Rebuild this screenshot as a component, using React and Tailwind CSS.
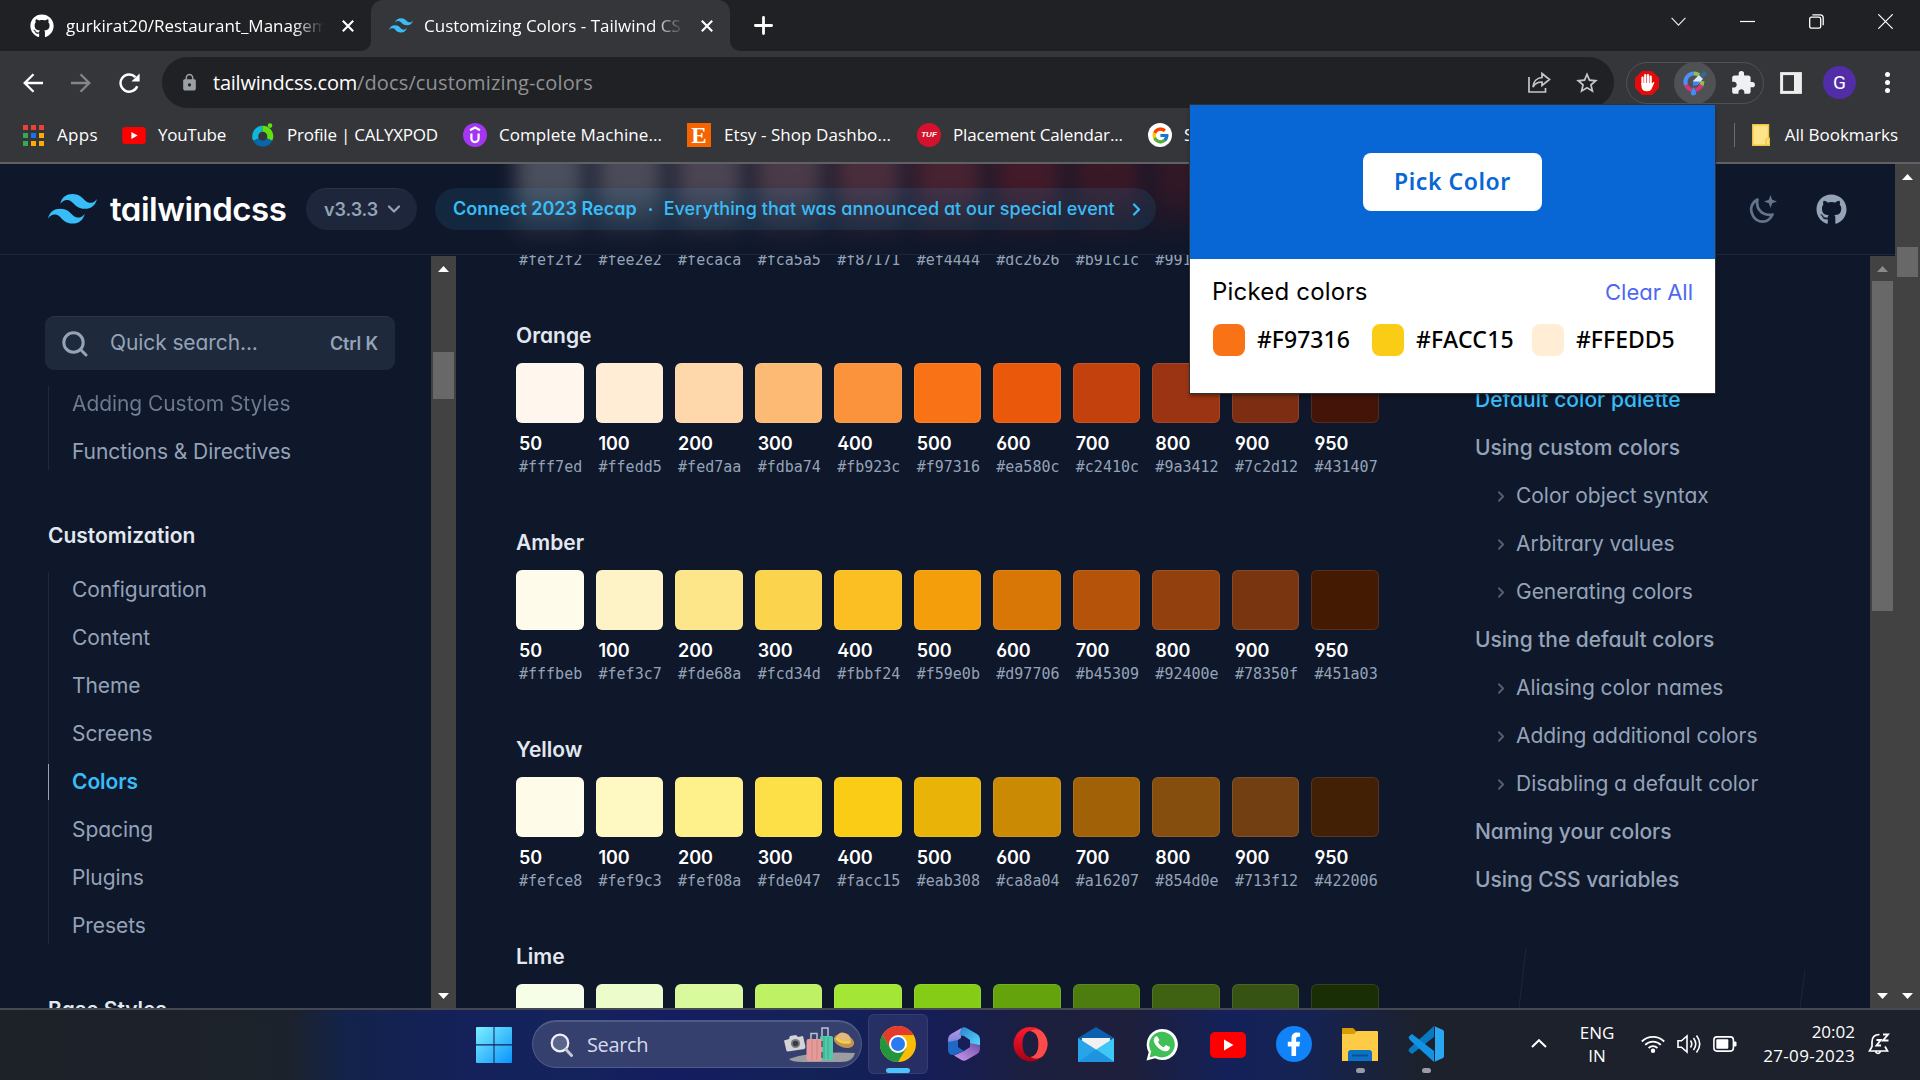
import React from "react";
import { FaGithub } from "react-icons/fa";
import { FcGoogle } from "react-icons/fc";
import { MdLock, MdExtension, MdStarBorder } from "react-icons/md";

const SHADES = ["50", "100", "200", "300", "400", "500", "600", "700", "800", "900", "950"];

const RED = ["#fef2f2", "#fee2e2", "#fecaca", "#fca5a5", "#f87171", "#ef4444", "#dc2626", "#b91c1c", "#991b1b", "#7f1d1d", "#450a0a"];

const PALETTES = [
  { name: "Red", colors: RED },
  { name: "Orange", colors: ["#fff7ed", "#ffedd5", "#fed7aa", "#fdba74", "#fb923c", "#f97316", "#ea580c", "#c2410c", "#9a3412", "#7c2d12", "#431407"] },
  { name: "Amber", colors: ["#fffbeb", "#fef3c7", "#fde68a", "#fcd34d", "#fbbf24", "#f59e0b", "#d97706", "#b45309", "#92400e", "#78350f", "#451a03"] },
  { name: "Yellow", colors: ["#fefce8", "#fef9c3", "#fef08a", "#fde047", "#facc15", "#eab308", "#ca8a04", "#a16207", "#854d0e", "#713f12", "#422006"] },
  { name: "Lime", colors: ["#f7fee7", "#ecfccb", "#d9f99d", "#bef264", "#a3e635", "#84cc16", "#65a30d", "#4d7c0f", "#3f6212", "#365314", "#1a2e05"] },
];

function TailwindMark({ className }) {
  return (
    <svg viewBox="0 0 54 33" className={className} fill="#38bdf8">
      <path fillRule="evenodd" d="M27 0c-7.2 0-11.7 3.6-13.5 10.8 2.7-3.6 5.85-4.95 9.45-4.05 2.054.513 3.522 2.004 5.147 3.653C30.744 13.09 33.808 16.2 40.5 16.2c7.2 0 11.7-3.6 13.5-10.8-2.7 3.6-5.85 4.95-9.45 4.05-2.054-.513-3.522-2.004-5.147-3.653C36.756 3.11 33.692 0 27 0zM13.5 16.2C6.3 16.2 1.8 19.8 0 27c2.7-3.6 5.85-4.95 9.45-4.05 2.054.514 3.522 2.004 5.147 3.653C17.244 29.29 20.308 32.4 27 32.4c7.2 0 11.7-3.6 13.5-10.8-2.7 3.6-5.85 4.95-9.45 4.05-2.054-.513-3.522-2.004-5.147-3.653C23.256 19.31 20.192 16.2 13.5 16.2z" />
    </svg>
  );
}

function CloseX() {
  return (
    <svg viewBox="0 0 12 12" className="size-3 shrink-0" stroke="#fff" strokeWidth="2.1" fill="none">
      <path d="M.8.8l10.4 10.4M11.2.8L.8 11.2" />
    </svg>
  );
}

function TabStrip() {
  return (
    <div className="flex h-[51px] bg-[#35363a]">
      <div className="flex h-[51px] w-[371px] items-center rounded-br-[10px] bg-[#202124] pl-[30px]">
        <FaGithub className="size-6 shrink-0 text-white" />
        <div className="ml-3 w-[258px] overflow-hidden text-[17px] leading-6 text-white [mask-image:linear-gradient(to_right,#000_88%,transparent)]">
          <span className="whitespace-nowrap">gurkirat20/Restaurant_Managem</span>
        </div>
        <div className="ml-[18px]"><CloseX /></div>
      </div>
      <div className="bg-[#202124]">
        <div className="flex h-[51px] w-[359px] items-center rounded-t-[12px] bg-[#35363a] pl-[18px]">
          <TailwindMark className="h-[15px] w-[24px] shrink-0" />
          <div className="ml-[11px] w-[260px] overflow-hidden text-[17px] leading-6 text-white [mask-image:linear-gradient(to_right,#000_88%,transparent)]">
            <span className="whitespace-nowrap">Customizing Colors - Tailwind CS</span>
          </div>
          <div className="ml-[17px]"><CloseX /></div>
        </div>
      </div>
      <div className="flex flex-1 rounded-bl-[10px] bg-[#202124]">
        <svg viewBox="0 0 19 19" className="ml-6 mt-4 size-[19px]" stroke="#fff" strokeWidth="2.8" strokeLinecap="round">
          <path d="M9.5 1.4v16.2M1.4 9.5h16.2" />
        </svg>
        <div className="ml-auto flex h-[43px] items-center gap-[54px] pr-[27px]">
          <svg viewBox="0 0 15 15" className="size-[15px]" stroke="#e8e8e8" strokeWidth="1.2" fill="none"><path d="M.6 3.8l6.9 7.4 6.9-7.4" /></svg>
          <svg viewBox="0 0 15 15" className="size-[15px]" stroke="#fff" strokeWidth="1.2" fill="none"><path d="M0 7.5h15" /></svg>
          <svg viewBox="0 0 15 15" className="size-[15px]" stroke="#fff" strokeWidth="1.3" fill="none"><rect x=".7" y="3.2" width="11" height="11" rx="1.8" /><path d="M3.4.8h7.8q3 0 3 3v7.4" /></svg>
          <svg viewBox="0 0 15 15" className="size-[15px]" stroke="#fff" strokeWidth="1.2" fill="none"><path d="M.3.3l14.4 14.4M14.7.3L.3 14.7" /></svg>
        </div>
      </div>
    </div>
  );
}

function Toolbar() {
  return (
    <div className="flex h-[57px] items-start bg-[#35363a] pt-[6px]">
      <div className="flex h-[51px] w-[162px] items-center gap-[28px] pl-[23px]">
        <svg viewBox="0 0 20 20" className="size-5" stroke="#fff" strokeWidth="2.3" fill="none"><path d="M20 10H2M10.5 1.2L1.7 10l8.8 8.8" /></svg>
        <svg viewBox="0 0 20 20" className="size-5" stroke="#85868a" strokeWidth="2.3" fill="none"><path d="M0 10h18M9.5 1.2l8.8 8.8-8.8 8.8" /></svg>
        <svg viewBox="0 0 21 20" className="h-5 w-[21px]" fill="none"><path d="M18.2 13.2A8.6 8.6 0 1 1 16.4 4.2" stroke="#fff" strokeWidth="2.4" /><path d="M20.6.4v8.2h-8.2z" fill="#fff" /></svg>
      </div>
      <div className="flex h-[51px] w-[1452px] items-center rounded-full bg-[#202124] pl-[18px] pr-[14px]">
        <MdLock className="size-[19px] text-[#9aa0a6]" />
        <div className="ml-[14px] whitespace-nowrap text-[20px] leading-7">
          <span className="tracking-[-0.23px] text-white">tailwindcss.com</span>
          <span className="tracking-[0.14px] text-[#8f9195]">/docs/customizing-colors</span>
        </div>
        <svg viewBox="0 0 23 21" className="ml-auto h-[21px] w-[23px]" stroke="#c4c6ca" strokeWidth="1.7" fill="none"><path d="M1 5v15h16.500v-4M14 1.500l7.500 6-7.500 6V10c-4 0-7 1.500-9 5 .3-5 3.500-9 9-9.500z" /></svg>
        <MdStarBorder className="ml-[23px] size-[26px] text-[#c4c6ca]" />
      </div>
      <div className="ml-3 mt-[5px] flex h-[42px] w-[138px] items-center rounded-full border border-[#515257] pl-[8px]">
        <svg viewBox="0 0 24 24" className="size-6 shrink-0"><path d="M7 0h10l7 7v10l-7 7H7l-7-7V7z" fill="#e60b0b" /><path d="M7.500 13V6.500M10.200 12V4M13 12V4M15.700 12V5.500" stroke="#fff" strokeWidth="2.200" strokeLinecap="round" /><path d="M6.400 12h10.400v1l1.200-1.700q1.200-.6 1.300.4l-2.600 6q-1 2.500-4.500 2.500-5.800 0-5.800-5.500z" fill="#fff" /></svg>
        <div className="ml-[15px] flex size-[42px] shrink-0 items-center justify-center rounded-full bg-[#505155]">
          <svg viewBox="0 0 26 26" className="size-[26px]" fill="none">
            <path d="M12 3.500A8.500 8.500 0 0 0 4 15" stroke="#4f8ff7" strokeWidth="4" />
            <path d="M12 3.500q3 0 5 1.500M20.500 11l-1 5" stroke="#8bc34a" strokeWidth="4" />
            <path d="M4 15a8.500 8.500 0 0 0 6 5M13.500 20a8.500 8.500 0 0 0 6-5" stroke="#d6337c" strokeWidth="4" />
            <path d="M11 11l6-6 4 4-6 6h-4z" fill="#dbe9fb" /><path d="M11 11.500h7l-3.500 4H11z" fill="#3f82ee" />
            <path d="M18 5l4-4 3 3-4 4z" fill="#2f6d92" /><path d="M11.500 17q5.500 8 0 8.500t0-8.500z" fill="#3f8ff2" />
          </svg>
        </div>
        <MdExtension className="ml-[14px] size-[26px] shrink-0 text-[#eef0f3]" />
      </div>
      <div className="ml-4 flex h-[51px] items-center">
        <svg viewBox="0 0 22 22" className="size-[22px]"><rect x="1.600" y="1.600" width="18.800" height="18.800" fill="none" stroke="#eee" strokeWidth="3" /><rect x="14" y="1" width="7" height="20" fill="#eee" /></svg>
        <div className="ml-[21px] flex size-[33px] items-center justify-center rounded-full bg-[#512da8] font-['Roboto'] text-[19px] leading-none text-white">G</div>
        <div className="ml-[29px] flex flex-col gap-[3px]">
          <div className="size-[5px] rounded-full bg-white" /><div className="size-[5px] rounded-full bg-white" /><div className="size-[5px] rounded-full bg-white" />
        </div>
      </div>
    </div>
  );
}

function Bookmark({ icon, gap, label, className }) {
  return (
    <div className={"flex shrink-0 items-center " + className}>
      <div className="shrink-0">{icon}</div>
      <div className={"whitespace-nowrap " + gap}>{label}</div>
    </div>
  );
}

function YouTubeMark({ className }) {
  return (
    <svg viewBox="0 0 36 26" className={className}><rect width="36" height="26" rx="5" fill="#f00" /><path d="M14 7.500l9.500 5.500-9.500 5.500z" fill="#fff" /></svg>
  );
}

function BookmarksBar() {
  const dots = ["#ea4335", "#ea4335", "#ea4335", "#34a853", "#1a73e8", "#fbab04", "#34a853", "#fbab04", "#fbab04"];
  return (
    <div className="flex h-[56px] items-center border-b-2 border-[#606165] bg-[#35363a] text-[17px] leading-6 text-white">
      <Bookmark
        className="w-[99px] pl-[23px]" gap="ml-[13px] tracking-[0.3px]" label="Apps"
        icon={<div className="grid grid-cols-3 gap-[3px]">{dots.map((c, i) => <div key={i} className="size-[5px]" style={{ background: c }} />)}</div>}
      />
      <Bookmark className="w-[130px] pl-[23px]" gap="ml-3 tracking-[-0.27px]" label="YouTube" icon={<YouTubeMark className="h-[17px] w-6" />} />
      <Bookmark
        className="w-[234px] pl-[23px]" gap="ml-[13px] tracking-[-0.22px]" label="Profile | CALYXPOD"
        icon={
          <svg viewBox="0 0 22 24" className="h-6 w-[22px]" fill="none">
            <path d="M10.500 5.700A7.500 7.500 0 0 0 4 16.500" stroke="#13b5d8" strokeWidth="6" />
            <path d="M10.500 5.700A7.500 7.500 0 0 1 17.500 16.500" stroke="#5fe00f" strokeWidth="6" />
            <path d="M4 16.500a7.500 7.500 0 0 0 13.500 0" stroke="#0767a8" strokeWidth="6" />
            <circle cx="18" cy="2.600" r="2.300" fill="#5fe00f" />
          </svg>
        }
      />
      <Bookmark
        className="w-[224px]" gap="ml-3 tracking-[0.06px]" label="Complete Machine..."
        icon={<svg viewBox="0 0 24 24" className="size-6"><circle cx="12" cy="12" r="12" fill="#a435f0" /><path d="M7 7.200L12 4.500l5 2.700M8.400 10.500v5a3.600 3.600 0 0 0 7.200 0v-5" stroke="#fff" strokeWidth="2.200" fill="none" /></svg>}
      />
      <Bookmark
        className="w-[230px]" gap="ml-[13px] tracking-[0.07px]" label="Etsy - Shop Dashbo..."
        icon={<div className="flex size-6 items-center justify-center bg-[#f56400] font-['Liberation_Serif'] text-[23px] font-bold leading-none text-white">E</div>}
      />
      <Bookmark
        className="w-[231px]" gap="ml-3 tracking-[-0.12px]" label="Placement Calendar..."
        icon={<div className="flex size-6 items-center justify-center rounded-full bg-[#d4122d] font-['Liberation_Sans'] text-[8px] font-bold italic tracking-normal text-white">TUF</div>}
      />
      <Bookmark
        className="w-[57px]" gap="ml-3" label="S"
        icon={<div className="flex size-6 items-center justify-center rounded-full bg-white"><FcGoogle className="size-[19px]" /></div>}
      />
      <div className="ml-auto h-6 w-px bg-[#6b6c70]" />
      <svg viewBox="0 0 18 22" className="ml-[17px] h-[22px] w-[18px]"><path d="M.7.700h15.800v13.500h1v7.100H.7z" fill="#ffe388" stroke="#eec53e" strokeWidth="1.400" /><path d="M14 21v-5q0-1.500 1.700-1.500" fill="none" stroke="#eec53e" strokeWidth="1.400" /></svg>
      <div className="ml-[15px] mr-[22px] whitespace-nowrap">All Bookmarks</div>
    </div>
  );
}

function Chevron({ className }) {
  return (
    <svg viewBox="0 0 9 13" className={className} fill="none" stroke="currentColor" strokeWidth="2.200" strokeLinecap="round" strokeLinejoin="round"><path d="M2 1.500l5 5-5 5" /></svg>
  );
}

function DocsHeader() {
  return (
    <div className="relative flex h-[91px] items-center overflow-hidden border-b border-[#1c2539] pl-[48px]">
      <div className="absolute left-[516px] top-[-30px] flex w-[864px] gap-3 opacity-25 blur-[10px]">
        {RED.map((c) => <div key={c} className="h-[110px] flex-1" style={{ background: `linear-gradient(to bottom, ${c} 50%, transparent)` }} />)}
      </div>
      <div className="relative flex w-full items-center whitespace-nowrap">
        <TailwindMark className="h-[30px] w-[49px]" />
        <div className="ml-[13px] w-[177px] text-[33px] font-semibold leading-[42px] tracking-[-0.5px] text-white">tailwindcss</div>
        <div className="ml-[19px] flex h-[42px] w-[111px] items-center rounded-full border-t border-[#29344a] bg-[#1d263a] pl-[18px] text-[18px] font-semibold tracking-[-0.1px] text-[#94a3b8]">
          v3.3.3
          <svg viewBox="0 0 14 9" className="ml-[9px] h-[9px] w-[14px]" fill="none" stroke="#94a3b8" strokeWidth="2.200" strokeLinecap="round" strokeLinejoin="round"><path d="M2 1.500l5 5 5-5" /></svg>
        </div>
        <div className="ml-[18px] flex h-[42px] w-[721px] items-center rounded-full bg-[#38bdf8]/10 pl-[18px] text-[18px] leading-[42px] text-[#38bdf8]">
          <span className="font-semibold">Connect 2023 Recap</span>
          <div className="mx-[12px] size-[3px] rounded-full bg-[#38bdf8]" />
          <span className="font-medium tracking-[0.04px]">Everything that was announced at our special event</span>
          <Chevron className="ml-[17px] h-[13px] w-[9px]" />
        </div>
        <svg viewBox="0 0 28 29" className="ml-auto h-[29px] w-7" fill="none">
          <path d="M8.500 4.500C2 8 .5 15 4 20.800 8 28 19 29.500 23.500 19.500 12.500 21.500 6.500 13 8.500 4.500z" stroke="#64748b" strokeWidth="2.700" strokeLinejoin="round" />
          <path d="M21.500 0l1.700 4.800L28 6.500l-4.800 1.700-1.700 4.800-1.700-4.800L15 6.500l4.800-1.700z" fill="#64748b" />
        </svg>
        <FaGithub className="ml-[39px] mr-[48px] size-[31px] text-[#94a3b8]" />
      </div>
    </div>
  );
}

function Arrow({ down, dim }) {
  return (
    <svg viewBox="0 0 11 6" className="h-[6px] w-[11px]" fill={dim ? "#8a8a8a" : "#fff"}><path d={down ? "M0 0h11L5.500 6z" : "M0 6h11L5.500 0z"} /></svg>
  );
}

function Scrollbar({ spacer, thumb, dim, className }) {
  return (
    <div className={"flex w-[25px] shrink-0 flex-col items-center bg-[#424242] " + className}>
      <Arrow dim={dim} />
      <div className={spacer} />
      <div className={"w-[21px] bg-[#686868] " + thumb} />
      <div className="mb-[9px] mt-auto"><Arrow down /></div>
    </div>
  );
}

const NAV = ["Configuration", "Content", "Theme", "Screens", "Colors", "Spacing", "Plugins", "Presets"];

function Sidebar() {
  return (
    <div className="w-[431px] shrink-0 overflow-hidden whitespace-nowrap pt-[61px] tracking-[-0.07px]">
      <div className="ml-[45px] flex h-[54px] w-[350px] items-center rounded-[9px] border-t border-[#2a3648] bg-[#1e293b] pl-[17px] pr-[17px] text-[21px] text-[#94a3b8]">
        <svg viewBox="0 0 26 26" className="size-[26px]" fill="none" stroke="#94a3b8" strokeWidth="3" strokeLinecap="round"><circle cx="11.500" cy="11.500" r="9.700" /><path d="M18.800 18.800L24 24" /></svg>
        <div className="mb-px ml-[22px] tracking-[-0.1px]">Quick search...</div>
        <div className="mb-px ml-auto text-[18px] font-semibold tracking-[-0.15px]">Ctrl K</div>
      </div>
      <div className="ml-[48px] mt-[16px] flex flex-col gap-3 border-l border-[#1e293b] pl-[23px] text-[21px] leading-9 text-[#94a3b8]">
        <div className="bg-gradient-to-b from-[#5b677c] to-[#7f8da2] bg-clip-text text-transparent">Adding Custom Styles</div>
        <div>Functions &amp; Directives</div>
      </div>
      <div className="ml-[48px] mt-[48px] text-[21px] font-semibold leading-9 tracking-normal text-[#e2e8f0]">Customization</div>
      <div className="ml-[48px] mt-[18px] flex flex-col gap-3 text-[21px] leading-9 text-[#94a3b8] shadow-[inset_1px_0_0_#1e293b]">
        {NAV.map((n) => n === "Colors"
          ? <div key={n} className="border-l border-[#94a3b8] pl-[23px] font-semibold text-[#38bdf8]">{n}</div>
          : <div key={n} className="pl-[24px]">{n}</div>)}
      </div>
      <div className="ml-[48px] mt-[48px] text-[21px] font-semibold leading-9 text-[#e2e8f0]">Base Styles</div>
    </div>
  );
}

function Palette({ name, colors }) {
  return (
    <div className="h-[207px]">
      <div className="text-[21px] font-semibold leading-[32px] text-[#e2e8f0]">{name}</div>
      <div className="mt-[11px] grid grid-cols-11 gap-x-3">
        {colors.map((c, i) => (
          <div key={c} className="min-w-0">
            <div className="h-[60px] rounded-[6px] shadow-[inset_0_0_0_1px_rgba(255,255,255,0.1)]" style={{ backgroundColor: c }} />
            <div className="mt-[9px] pl-[3px] text-[18px] font-semibold leading-6 tracking-[-0.1px] text-white">{SHADES[i]}</div>
            <div className="pl-[3px] font-['DejaVu_Sans_Mono'] text-[15px] leading-[22px] text-[#94a3b8]">{c}</div>
          </div>
        ))}
      </div>
    </div>
  );
}

const TOC = [
  ["Default color palette", "active"],
  ["Using custom colors"],
  ["Color object syntax", "sub"],
  ["Arbitrary values", "sub"],
  ["Generating colors", "sub"],
  ["Using the default colors"],
  ["Aliasing color names", "sub"],
  ["Adding additional colors", "sub"],
  ["Disabling a default color", "sub"],
  ["Naming your colors"],
  ["Using CSS variables"],
];

function TableOfContents() {
  return (
    <div className="relative flex min-w-0 flex-1 flex-col gap-3 whitespace-nowrap pl-[95px] pt-[127px] text-[21px] leading-9 tracking-[-0.03px] text-[#94a3b8]">
      {TOC.map(([label, kind]) => kind === "sub" ? (
        <div key={label} className="flex items-center pl-[22px]">
          <Chevron className="mr-[11px] h-[11px] w-[8px] text-[#526076]" />
          {label}
        </div>
      ) : (
        <div key={label} className={kind ? "font-medium tracking-[0.04px] text-[#38bdf8]" : "font-medium"}>{label}</div>
      ))}
      <svg viewBox="0 0 290 60" className="absolute bottom-0 left-[135px] h-[60px] w-[290px]" stroke="#1c2538" strokeWidth="1.200"><path d="M11 0L4 60M293 0l-8 60" /></svg>
    </div>
  );
}

function PickedColor({ swatch, label, className }) {
  return (
    <div className={"flex " + className}>
      <div className={"mr-3 size-8 rounded-[8px] " + swatch} />
      {label}
    </div>
  );
}

function Popup() {
  return (
    <div className="absolute left-[1190px] top-[105px] z-10 h-[288px] w-[525px] whitespace-nowrap bg-white shadow-[0_0_0_1px_#2f3237,0_3px_4px_rgba(0,0,0,0.4)]">
      <div className="flex h-[154px] items-center justify-center bg-[#0867d5]">
        <div className="flex h-[58px] w-[179px] items-center justify-center rounded-[8px] bg-white pb-[2px] font-['Noto_Sans'] text-[23px] font-semibold tracking-[0.55px] text-[#0867d5]">Pick Color</div>
      </div>
      <div className="flex items-center justify-between px-[22px] pt-[17px] leading-8">
        <div className="text-[24px] font-normal tracking-[0.2px] text-black">Picked colors</div>
        <div className="text-[22px] font-normal text-[#5068f0]">Clear All</div>
      </div>
      <div className="mt-[16px] flex pl-[23px] font-['Noto_Sans'] text-[23px] font-medium leading-[31px] text-black">
        <PickedColor className="w-[159px]" swatch="bg-[#f97316]" label="#F97316" />
        <PickedColor className="w-[160px] tracking-[0.25px]" swatch="bg-[#facc15]" label="#FACC15" />
        <PickedColor swatch="bg-[#ffedd5]" label="#FFEDD5" />
      </div>
    </div>
  );
}

function TaskIcon({ children, active, running }) {
  return (
    <div className={"flex h-[60px] w-[60px] shrink-0 flex-col items-center rounded-[6px] pt-3 " + (active ? "bg-white/8 shadow-[inset_0_0_0_1px_rgba(255,255,255,0.07)]" : "")}>
      {children}
      {active && <div className="mt-[6px] h-[5px] w-6 rounded-full bg-[#4cc2ff]" />}
      {running && <div className="mt-[6px] h-[5px] w-[9px] rounded-full bg-[#9b9ca3]" />}
    </div>
  );
}

function SearchArt() {
  return (
    <svg viewBox="0 0 72 40" className="h-10 w-[72px]">
      <path d="M6 34q22-8 66-6-2 9-14 9H20Q8 37 6 34z" fill="#9b9da3" />
      <path d="M1 15.500l5-1.500 1-3 6-1 2 2 5-1 2.500 11-1 2L5 26.500 3.500 26z" fill="#d3d4d6" /><circle cx="12.500" cy="18.500" r="4.600" fill="#7a7c80" /><circle cx="12.500" cy="18.500" r="2.800" fill="#3a3c41" />
      <path d="M28 14V8.500h6V14M39 11V3h6v8" fill="none" stroke="#b9c3ce" strokeWidth="1.500" />
      <rect x="37" y="11" width="13" height="24" rx="1.500" fill="#53c9ab" /><path d="M41 12v22M45 12v22" stroke="#3aa98c" strokeWidth="1" />
      <rect x="23.500" y="14" width="15.500" height="22" rx="2" fill="#e79a9a" /><path d="M29 15v20M34 15v20" stroke="#cf8384" strokeWidth="1" /><path d="M39 16v18" stroke="#333" strokeWidth="1" strokeDasharray="6 5" />
      <ellipse cx="61" cy="16" rx="10.500" ry="6.500" transform="rotate(20 61 16)" fill="#c39350" /><path d="M53 13q3-7 9-5t6 8q-6 4-15-3z" fill="#e2b978" /><path d="M53 13q5 6 14.500 4" stroke="#f2cf48" strokeWidth="2.500" fill="none" />
    </svg>
  );
}

function Taskbar() {
  return (
    <div className="flex h-[72px] items-start border-t-2 border-[#454850] bg-[linear-gradient(to_right,#1d2128_0%,#1c222b_15%,#13234a_18%,#14215a_24%,#14235c_30%,#151d61_35%,#132257_42%,#151d58_48%,#1c1f3d_54%,#1d1f3b_59%,#14215a_64%,#152353_68%,#1c212c_74%,#1d212b_100%)] pt-1">
      <svg viewBox="0 0 35 35" className="ml-[476px] mt-[13px] size-[36px]">
        <defs><linearGradient id="win" x1="0" y1="0" x2="1" y2="1"><stop offset="0" stopColor="#7defff" /><stop offset="1" stopColor="#0a94fb" /></linearGradient></defs>
        <path d="M1 0h16v16.700H0V1q0-1 1-1zM18 0h16q1 0 1 1v15.700H18zM0 18h17v17H1q-1 0-1-1zM18 18h17v16q0 1-1 1H18z" fill="url(#win)" />
      </svg>
      <div className="ml-[20px] mt-[6px] flex h-[48px] w-[330px] items-center rounded-full border border-t-2 border-[#4f5a86] bg-[#35406e] pl-[17px] pr-[6px]">
        <svg viewBox="0 0 23 24" className="h-6 w-[23px]" fill="none"><circle cx="10" cy="10" r="8.300" fill="#5a658e" stroke="#f0f0f4" strokeWidth="2.200" /><path d="M16 16.500l5.500 6" stroke="#c5c8d6" strokeWidth="3" strokeLinecap="round" /></svg>
        <div className="ml-[14px] text-[20px] leading-7 tracking-[-0.35px] text-[#d7daea]">Search</div>
        <div className="ml-auto"><SearchArt /></div>
      </div>
      <div className="ml-[6px] flex gap-[6px]">
        <TaskIcon active>
          <svg viewBox="0 0 36 36" className="size-9 shrink-0">
            <circle cx="18" cy="18" r="18" fill="#fbbc05" />
            <path d="M2.400 9A18 18 0 0 1 33.600 9H18L10 22z" fill="#e33b2e" />
            <path d="M2.400 9A18 18 0 0 0 18 36l8-13.500H10.200z" fill="#22963f" />
            <circle cx="18" cy="18" r="9" fill="#fff" /><circle cx="18" cy="18" r="7" fill="#2b7bf0" />
          </svg>
        </TaskIcon>
        <TaskIcon>
          <svg viewBox="0 0 32 34" className="mt-[1px] h-[34px] w-8">
            <defs>
              <linearGradient id="m1" x1="0" y1="0" x2="0" y2="1"><stop offset="0" stopColor="#b79be8" /><stop offset="1" stopColor="#5b74d6" /></linearGradient>
              <linearGradient id="m2" x1="0" y1="0" x2="1" y2="1"><stop offset="0" stopColor="#2f7fd0" /><stop offset="1" stopColor="#55dcff" /></linearGradient>
              <linearGradient id="m3" x1="1" y1="0" x2="0" y2="1"><stop offset="0" stopColor="#6d4fa6" /><stop offset="1" stopColor="#cf9bf2" /></linearGradient>
            </defs>
            <path d="M13.500 1L3 7Q0 8.800 0 12v12l10-1V13l3-2z" fill="url(#m1)" />
            <path d="M11 8l2.500-7Q16-.5 18.500 1L29 7q3 1.800 3 5v8l-10-3v-4l-6-4z" fill="url(#m2)" />
            <path d="M32 18v4q0 3.200-3 5l-10.500 6q-2.500 1.500-5 0L6 28.500 16 24l6-4v-4z" fill="url(#m3)" />
            <path d="M0 15v8.500Q0 26 2.500 27.500q2.500 1 5 .2L16 24l-6-4v-7z" fill="#1f68c4" />
            <path d="M16 10.500l6 3.300v6L16 23l-6-3.200v-6z" fill="#171f56" />
          </svg>
        </TaskIcon>
        <TaskIcon>
          <svg viewBox="0 0 35 36" className="h-9 w-[35px]">
            <defs><linearGradient id="op" x1="0" y1="0" x2="0" y2="1"><stop offset="0" stopColor="#ff1b2d" /><stop offset="1" stopColor="#a70014" /></linearGradient></defs>
            <path fillRule="evenodd" d="M17.500 1a17 17.200 0 1 0 .1 0zM17.500 5c5 0 8 6 8 13s-3 13-8 13-8-6-8-13 3-13 8-13z" fill="url(#op)" />
            <path d="M17.500 5q7-4 12.500 1.500 9 11 0 23.500-6 5-12.500 1 8-1.500 8-13t-8-13z" fill="#fb4b4b" />
          </svg>
        </TaskIcon>
        <TaskIcon>
          <svg viewBox="0 0 36 36" className="size-9">
            <path d="M0 12L18 1l18 11v8H0z" fill="#0a5fae" /><path d="M4 12h28v6L18 25 4 18z" fill="#f1f1f1" />
            <path d="M0 12l18 11.500L36 36H0z" fill="#27a5e8" /><path d="M36 12L18 23.500 36 36z" fill="#3ec8f5" /><path d="M0 36h36L18 23.500z" fill="#1d94dd" />
          </svg>
        </TaskIcon>
        <TaskIcon>
          <svg viewBox="0 0 32 34" className="mt-[1px] h-[34px] w-8">
            <path d="M.5 33.500l2.200-8.300A15.600 15.600 0 1 1 9 31.300z" fill="#fff" />
            <path d="M3.600 30.400l1.600-5.900A12.800 12.800 0 1 1 9.800 28.800z" fill="#3fbf55" />
            <path d="M11.300 9.600c-.8-1.200-3.800.6-3.600 3.800.3 4.200 7 10.900 11.600 10.900 3.500 0 5-3 4.600-4.400l-4-2-2 2.300c-2.600-.9-4.700-3-5.800-5.300l1.400-2z" fill="#fff" />
          </svg>
        </TaskIcon>
        <TaskIcon><YouTubeMark className="mt-[6px] h-[26px] w-9" /></TaskIcon>
        <TaskIcon>
          <svg viewBox="0 0 36 36" className="size-9">
            <circle cx="18" cy="18" r="18" fill="#0f83f7" />
            <path d="M15.500 30V20.500h-3.700v-4.700h3.700v-3.500c0-4 2.300-5.900 5.600-5.900l3 .3v4h-1.800c-1.700 0-2.200 1-2.200 2v3.100h3.900l-.7 4.700h-3.200V30z" fill="#fff" />
          </svg>
        </TaskIcon>
        <TaskIcon running>
          <svg viewBox="0 0 36 36" className="size-9 shrink-0">
            <path d="M0 3q0-1 1-1h10l4 4-3 4H0z" fill="#d99b00" />
            <path d="M0 8h12l3-3h20q1 0 1 1v29H0z" fill="#fdcb45" />
            <path d="M6 35v-8q0-3 3-3h18q3 0 3 3v8z" fill="#0c72c5" /><path d="M11 29.500h14" stroke="#074f92" strokeWidth="2" strokeLinecap="round" />
          </svg>
        </TaskIcon>
        <TaskIcon running>
          <svg viewBox="0 0 36 36" className="size-9 shrink-0">
            <path d="M26 0L3.500 20.500Q-1 24 1.500 26L4 28 26 11z" fill="#0878c3" />
            <path d="M26 36L3.500 15.500Q-1 12 1.500 10L4 8l22 17z" fill="#1192e3" />
            <path d="M26 0l9 4q1 .5 1 2v24q0 1.500-1 2l-9 4q1-.5 1-2V2q0-1.500-1-2z" fill="#2aa7f3" />
          </svg>
        </TaskIcon>
      </div>
      <div className="ml-auto flex h-[60px] items-center whitespace-nowrap pb-px text-[17px] leading-6 text-white">
        <svg viewBox="0 0 16 9" className="h-[9px] w-4" fill="none" stroke="#fff" strokeWidth="2"><path d="M1 8l7-6.800L15 8" /></svg>
        <div className="ml-[32px] w-[36px] text-center leading-[23px]">ENG<br />IN</div>
        <svg viewBox="0 0 24 18" className="ml-[26px] h-[18px] w-6" fill="none" stroke="#fff" strokeWidth="1.800"><path d="M.8 6.500a16 16 0 0 1 22.400 0M4.200 9.800a11 11 0 0 1 15.600 0M7.600 13a6.200 6.200 0 0 1 8.800 0" /><circle cx="12" cy="15.700" r="1.300" fill="#fff" /></svg>
        <svg viewBox="0 0 24 20" className="ml-[12px] h-5 w-6" fill="none" stroke="#fff" strokeWidth="1.600"><path d="M1 6.800h3.500L10 2v16l-5.500-4.800H1zM13.500 6.500q2.500 3.500 0 7M16.500 4q4.500 6 0 12M19.500 1.500q6.500 8.500 0 17" /></svg>
        <svg viewBox="0 0 24 16" className="ml-[12px] h-4 w-6"><rect x=".9" y=".9" width="19.500" height="14.200" rx="3" fill="none" stroke="#fff" strokeWidth="1.600" /><rect x="3.300" y="3.300" width="12" height="9.400" rx="1" fill="#fff" /><path d="M21 5.500h1.500q1 0 1 1v3q0 1-1 1H21z" fill="#fff" /></svg>
        <div className="ml-[25px] w-[93px] text-right">20:02<br /><span className="tracking-[0.3px]">27-09-2023</span></div>
        <svg viewBox="0 0 22 22" className="ml-[13px] mr-[30px] size-[22px]" fill="none" stroke="#fff" strokeWidth="1.700"><path d="M11.500 1.500Q4 1.500 4 9v4.500L1.500 18h18L17 13.500M7.500 18.500q2.500 4 5 0" /><path d="M8.500 7h4.200l-4.200 5.500h4.500M15 1.500h5L15 7.500h5.500" strokeWidth="1.900" /></svg>
      </div>
    </div>
  );
}

export default function App() {
  return (
    <div className="relative flex h-[1080px] w-[1920px] flex-col overflow-hidden bg-[#0f172a] font-['Open_Sans',sans-serif]">
      <TabStrip />
      <Toolbar />
      <BookmarksBar />
      <div className="flex min-h-0 flex-1 bg-[#0f172a] font-['Inter',sans-serif] [font-feature-settings:'cv02','cv03','cv04','cv11']">
        <div className="flex min-w-0 flex-1 flex-col">
          <DocsHeader />
          <div className="flex min-h-0 flex-1">
            <Sidebar />
            <Scrollbar className="mt-px pt-[10px]" spacer="h-[80px]" thumb="h-[47px]" />
            <div className="ml-[60px] w-[863px] shrink-0 overflow-hidden">
              <div className="mt-[-142px]">{PALETTES.map((p) => <Palette key={p.name} {...p} />)}</div>
            </div>
            <div className="ml-px flex min-w-0 flex-1 overflow-hidden"><TableOfContents /></div>
            <Scrollbar className="mt-px pt-[10px]" spacer="h-[9px]" thumb="h-[330px]" dim />
          </div>
        </div>
        <Scrollbar className="pt-[10px]" spacer="h-[67px]" thumb="h-[30px]" />
      </div>
      <Taskbar />
      <div className="font-['Inter',sans-serif] [font-feature-settings:'cv02','cv03','cv04','cv11']"><Popup /></div>
    </div>
  );
}
